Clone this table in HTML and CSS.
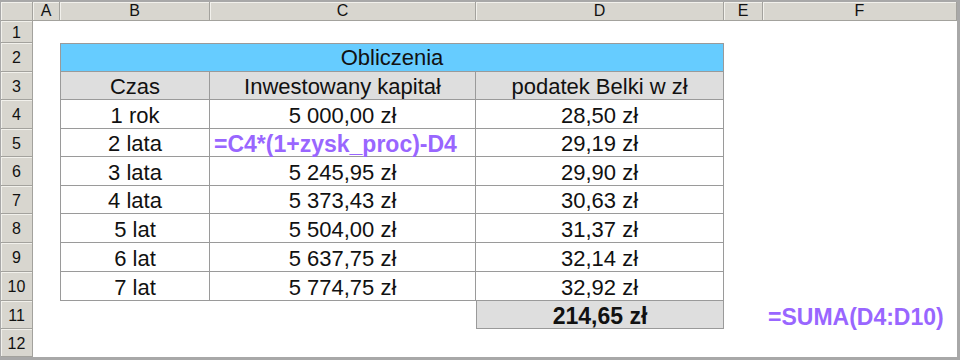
FILE: index.html
```html
<!DOCTYPE html>
<html lang="pl">
<head>
<meta charset="utf-8">
<title>Obliczenia</title>
<link rel="stylesheet" href="styles.css">
</head>
<body>
<div class="sheet">
  <div class="corner"></div>
  <div class="ch">A</div>
  <div class="ch">B</div>
  <div class="ch">C</div>
  <div class="ch">D</div>
  <div class="ch">E</div>
  <div class="ch">F</div>

  <div class="rh">1</div>
  <div class="c"></div><div class="c"></div><div class="c"></div><div class="c"></div><div class="c"></div><div class="c"></div>

  <div class="rh">2</div>
  <div class="c"></div>
  <div class="t title">Obliczenia</div>
  <div class="c"></div><div class="c"></div>

  <div class="rh">3</div>
  <div class="c"></div>
  <div class="t first th">Czas</div>
  <div class="t th">Inwestowany kapitał</div>
  <div class="t th">podatek Belki w zł</div>
  <div class="c"></div><div class="c"></div>

  <div class="rh">4</div>
  <div class="c"></div>
  <div class="t first">1 rok</div>
  <div class="t">5 000,00 zł</div>
  <div class="t">28,50 zł</div>
  <div class="c"></div><div class="c"></div>

  <div class="rh">5</div>
  <div class="c"></div>
  <div class="t first">2 lata</div>
  <div class="t formula">=C4*(1+zysk_proc)-D4</div>
  <div class="t">29,19 zł</div>
  <div class="c"></div><div class="c"></div>

  <div class="rh">6</div>
  <div class="c"></div>
  <div class="t first">3 lata</div>
  <div class="t">5 245,95 zł</div>
  <div class="t">29,90 zł</div>
  <div class="c"></div><div class="c"></div>

  <div class="rh">7</div>
  <div class="c"></div>
  <div class="t first">4 lata</div>
  <div class="t">5 373,43 zł</div>
  <div class="t">30,63 zł</div>
  <div class="c"></div><div class="c"></div>

  <div class="rh">8</div>
  <div class="c"></div>
  <div class="t first">5 lat</div>
  <div class="t">5 504,00 zł</div>
  <div class="t">31,37 zł</div>
  <div class="c"></div><div class="c"></div>

  <div class="rh">9</div>
  <div class="c"></div>
  <div class="t first">6 lat</div>
  <div class="t">5 637,75 zł</div>
  <div class="t">32,14 zł</div>
  <div class="c"></div><div class="c"></div>

  <div class="rh">10</div>
  <div class="c"></div>
  <div class="t first">7 lat</div>
  <div class="t">5 774,75 zł</div>
  <div class="t">32,92 zł</div>
  <div class="c"></div><div class="c"></div>

  <div class="rh">11</div>
  <div class="c"></div><div class="c"></div><div class="c"></div>
  <div class="t first sum">214,65 zł</div>
  <div class="c"></div>
  <div class="c formula">=SUMA(D4:D10)</div>

  <div class="rh">12</div>
  <div class="c"></div><div class="c"></div><div class="c"></div><div class="c"></div><div class="c"></div><div class="c"></div>
</div>
</body>
</html>
```

FILE: styles.css
```css
html, body {
  margin: 0;
  padding: 0;
  background: #ffffff;
}

.sheet {
  box-sizing: border-box;
  width: 960px;
  height: 360px;
  border-style: solid;
  border-color: #a8a8a8;
  border-width: 2px 3px 3px 1px;
  display: grid;
  grid-template-columns: 32px 27px 150px 266px 248px 39px 194px;
  grid-template-rows: 19px 22px 29px 28px 29px 28px 29px 28px 29px 29px 29px 28px 28px;
  font-family: "Liberation Sans", Arial, sans-serif;
  color: #111;
  background: #ffffff;
}

.sheet > div {
  box-sizing: border-box;
  min-width: 0;
  white-space: nowrap;
}

.corner,
.ch,
.rh {
  background: #d8d6cf;
  border-right: 1px solid #a3a29d;
  border-bottom: 1px solid #a3a29d;
  box-shadow: inset 1px 1px 0 #f2f1ec;
  font-size: 16px;
  color: #111;
  display: flex;
  align-items: center;
  justify-content: center;
}

.ch {
  line-height: 18px;
}

.rh {
  padding-top: 2px;
}

.c {
  font-size: 22px;
  display: flex;
  align-items: flex-end;
  line-height: 24px;
}

.t {
  font-size: 22px;
  line-height: 24px;
  display: flex;
  align-items: flex-end;
  justify-content: center;
  border-right: 1px solid #9a9a9a;
  border-bottom: 1px solid #9a9a9a;
}

.t.first {
  border-left: 1px solid #9a9a9a;
}

.title {
  grid-column: span 3;
  background: #66ccff;
  border-left: 1px solid #9a9a9a;
  border-top: 1px solid #9a9a9a;
  align-items: center;
  padding-top: 1px;
}

.th {
  background: #dedede;
}

.sum {
  background: #dedede;
  font-weight: bold;
  font-size: 23px;
}

.formula {
  color: #9966ff;
  font-weight: bold;
  font-size: 23px;
  justify-content: flex-start;
  padding-left: 4px;
}

.c.formula {
  padding-left: 5px;
}
```
